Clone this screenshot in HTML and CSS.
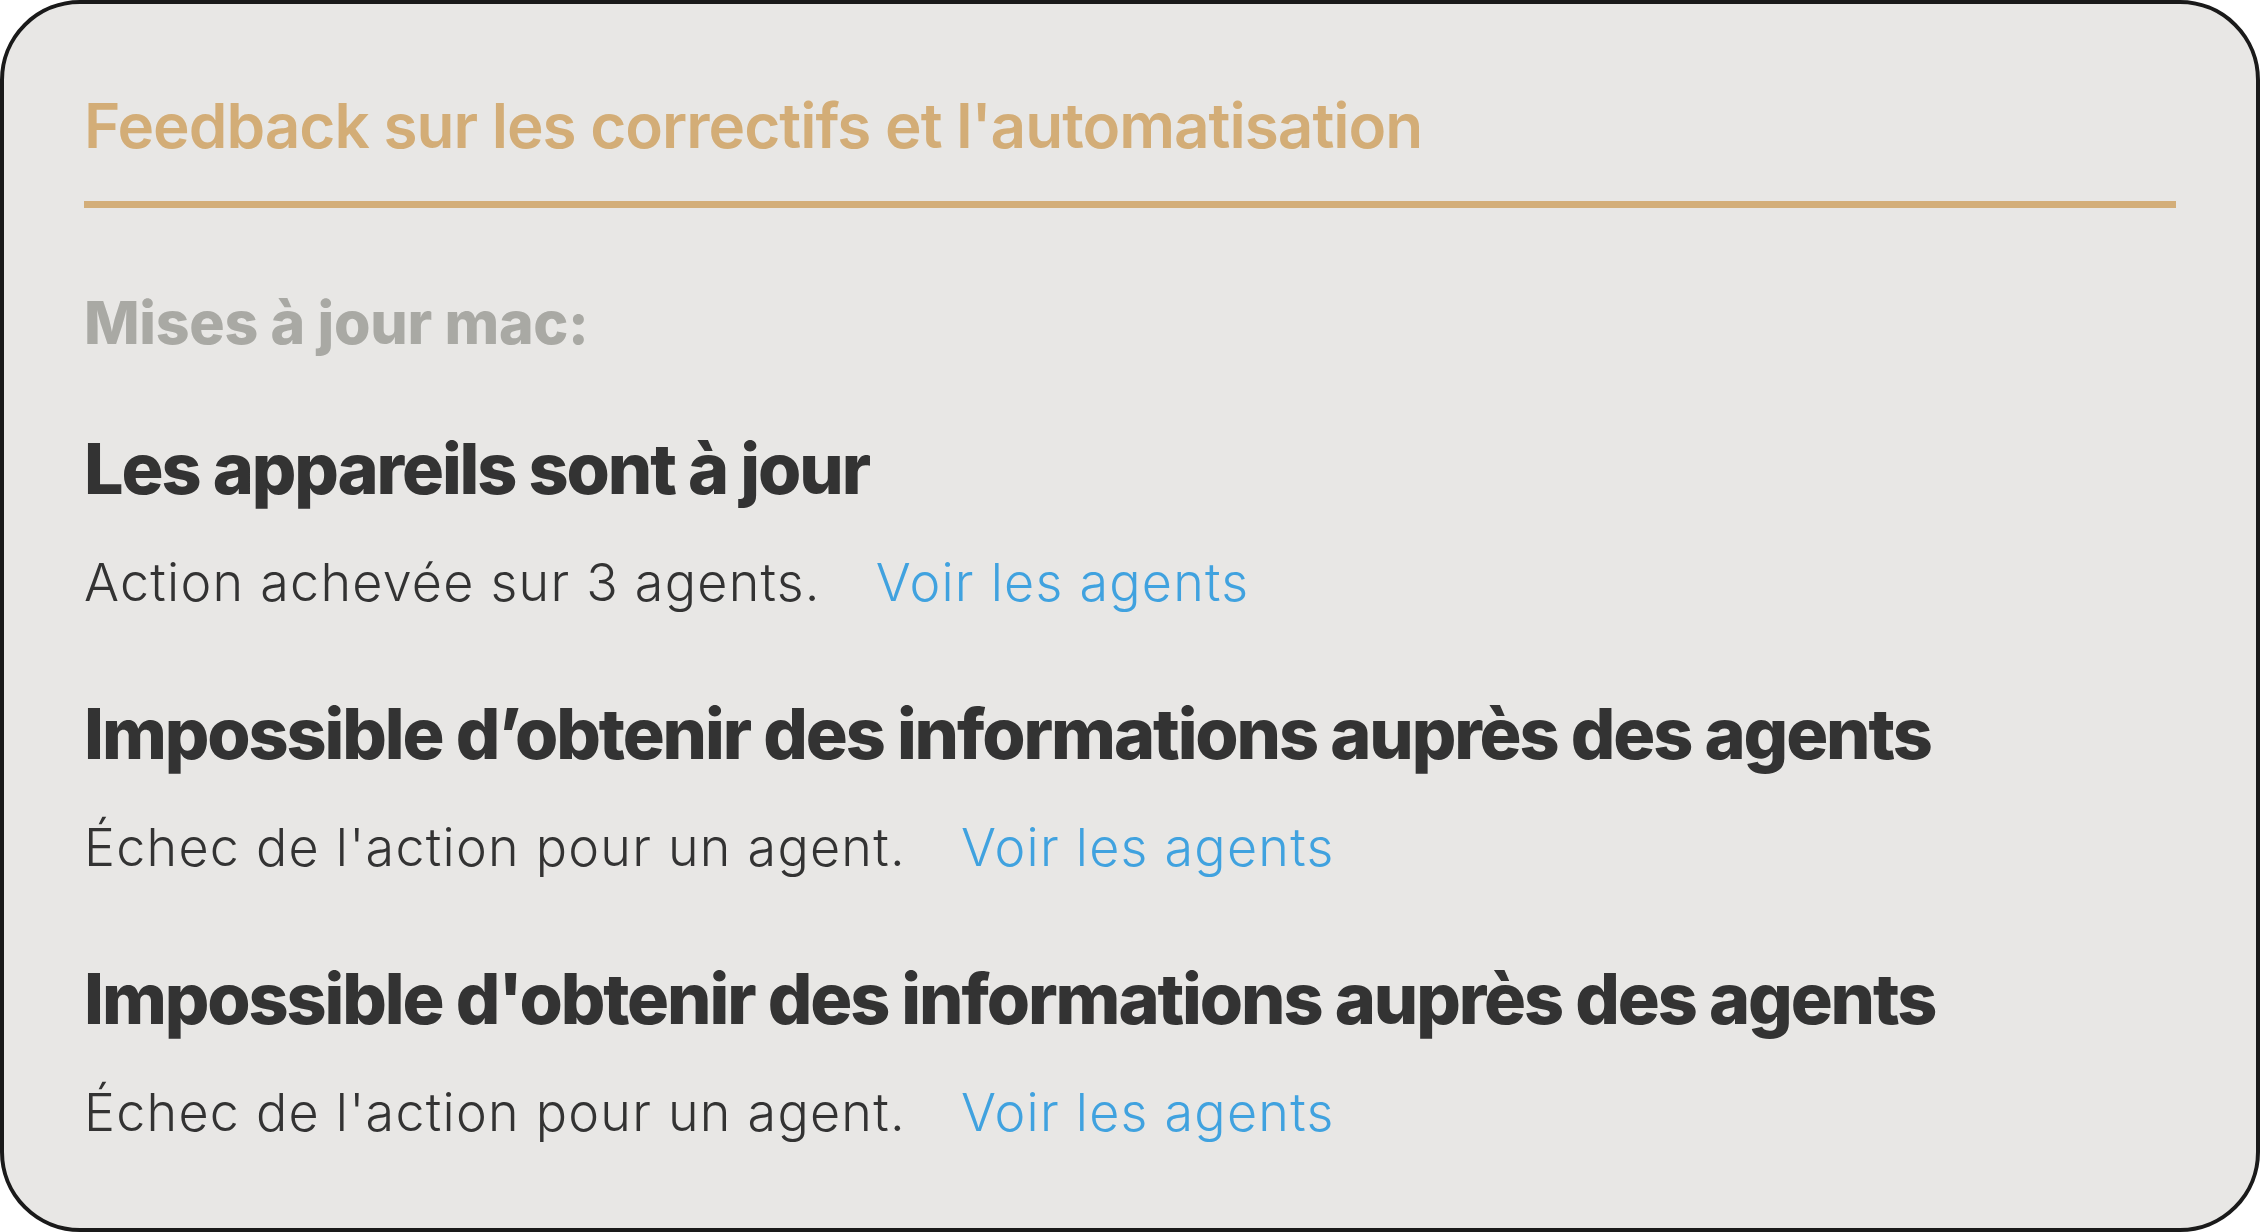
FILE: index.html
```html
<!DOCTYPE html>
<html lang="fr">
<head>
<meta charset="utf-8">
<title>Feedback</title>
<link rel="stylesheet" href="styles.css">
</head>
<body>
<main class="card">
  <h1 class="title">Feedback sur les correctifs et l'automatisation</h1>
  <div class="rule"></div>
  <h2 class="section">Mises à jour mac:</h2>
  <div class="items">
    <div class="item">
      <h3 class="item-title">Les appareils sont à jour</h3>
      <p class="item-sub"><span>Action achevée sur 3 agents.</span><a class="link" href="#">Voir les agents</a></p>
    </div>
    <div class="item">
      <h3 class="item-title">Impossible d’obtenir des informations auprès des agents</h3>
      <p class="item-sub"><span>Échec de l'action pour un agent.</span><a class="link" href="#">Voir les agents</a></p>
    </div>
    <div class="item">
      <h3 class="item-title">Impossible d'obtenir des informations auprès des agents</h3>
      <p class="item-sub"><span>Échec de l'action pour un agent.</span><a class="link" href="#">Voir les agents</a></p>
    </div>
  </div>
</main>
</body>
</html>
```

FILE: styles.css
```css
* { box-sizing: border-box; }
html, body { margin: 0; padding: 0; background: #ffffff; }
body { font-family: Inter, "Noto Sans", sans-serif; }
.card {
  width: 2260px;
  height: 1232px;
  border: 4px solid #1a1a1a;
  border-radius: 80px;
  background: #e8e7e5;
  padding: 91px 80px 0 80px;
  display: flex;
  flex-direction: column;
}
.title {
  margin: 0;
  font-size: 62px;
  line-height: 62px;
  font-weight: 560;
  letter-spacing: -1px;
  color: #d3ad77;
}
.rule {
  margin-top: 44px;
  height: 7px;
  background: #d3ae79;
}
.section {
  margin: 85px 0 0 0;
  font-size: 59px;
  line-height: 59px;
  font-weight: 760;
  letter-spacing: -0.3px;
  color: #a9a9a4;
}
.items {
  margin-top: 82px;
  display: flex;
  flex-direction: column;
  gap: 90px;
}
.item {
  display: flex;
  flex-direction: column;
  gap: 53px;
}
.item-title {
  margin: 0;
  font-size: 70px;
  line-height: 70px;
  font-weight: 760;
  letter-spacing: -2.1px;
  color: #333333;
}
.item-sub {
  margin: 0;
  display: flex;
  gap: 55px;
  font-size: 52px;
  line-height: 52px;
  font-weight: 340;
  letter-spacing: 1.25px;
  color: #333333;
}
.link {
  color: #40a2df;
  text-decoration: none;
}
```
